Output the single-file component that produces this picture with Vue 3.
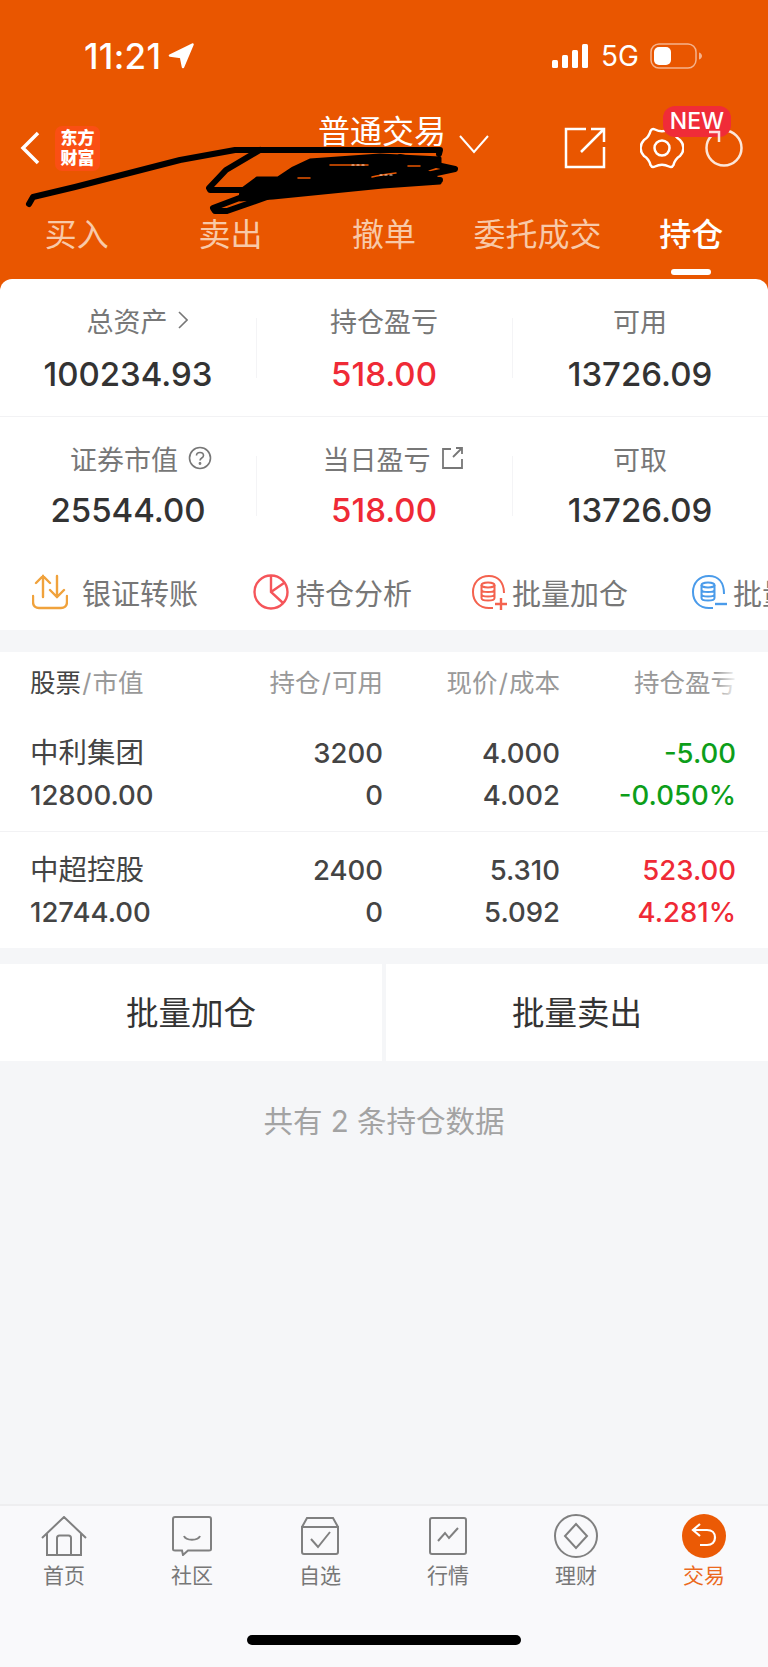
<template>
  <div class="page">
    <header class="head">
      <div class="status">
        <span class="time">11:21</span>
        <svg class="loc" width="26" height="26" viewBox="0 0 26 26"><path d="M24.500 1.500 2 12.500l11 1.500 2 10z" fill="#fff" stroke="#fff" stroke-width="2.500" stroke-linejoin="round"/></svg>
        <div class="status-right">
          <svg width="38" height="24" viewBox="0 0 38 24" fill="#fff">
            <rect x="0" y="16" width="6" height="8" rx="1.5"/>
            <rect x="10" y="11" width="6" height="13" rx="1.5"/>
            <rect x="20" y="6" width="6" height="18" rx="1.5"/>
            <rect x="30" y="0" width="6" height="24" rx="1.5"/>
          </svg>
          <span class="net">5G</span>
          <svg width="52" height="26" viewBox="0 0 52 26">
            <rect x="1" y="1" width="45" height="24" rx="8" fill="none" stroke="#fff" stroke-opacity=".55" stroke-width="1.5"/>
            <rect x="4" y="4" width="17" height="18" rx="5" fill="#fff"/>
            <path d="M49 9.5c2 .6 3 2 3 3.5s-1 2.900-3 3.500z" fill="#fff" fill-opacity=".55"/>
          </svg>
        </div>
      </div>

      <div class="nav">
        <svg class="back" width="20" height="34" viewBox="0 0 20 34"><path d="M18 2 3 17l15 15" fill="none" stroke="#fff" stroke-width="3.500"/></svg>
        <div class="logo">东方<br />财富</div>
        <div class="title">普通交易</div>
        <svg class="down" width="30" height="19" viewBox="0 0 30 19"><path d="m1 1 14 16L29 1" fill="none" stroke="#fff" stroke-width="2"/></svg>
        <svg class="share" width="42" height="42" viewBox="0 0 42 42" fill="none" stroke="#fff" stroke-width="2.500">
          <path d="M22 2H2v38h38V20M17 25 40 2M27 2h13v13"/>
        </svg>
        <svg class="gear" width="44" height="42" viewBox="0 0 44 42" fill="none" stroke="#fff" stroke-width="2.500" stroke-linejoin="round">
          <path d="M15 2.500Q22 6 29 2.500 32 1 33.500 4 35 10 40 13 47 21 40 29 35 32 33.500 38 32 41 29 39.500 22 36 15 39.500 12 41 10.500 38 9 32 4 29-3 21 4 13 9 10 10.500 4 12 1 15 2.500z"/>
          <circle cx="22" cy="21" r="7.500"/>
        </svg>
        <div class="refresh">
          <svg width="38" height="38" viewBox="0 0 38 38" fill="none" stroke="#fff" stroke-opacity=".85" stroke-width="2.500"><circle cx="19" cy="19" r="17.500"/></svg>
          <span class="badge">NEW</span>
          <svg class="refresh-arrow" width="38" height="38" viewBox="0 0 38 38" fill="none" stroke="#fff" stroke-opacity=".85" stroke-width="2.500"><path d="M4 3h10v10"/></svg>
        </div>
      </div>

      <nav class="tabs">
        <div v-for="t in tabs" :key="t" class="tab" :class="{ on: t === '持仓' }">{{ t }}</div>
      </nav>

      <!-- account number scribbled out in the screenshot -->
      <svg class="scribble" width="768" height="120" viewBox="0 100 768 120" fill="none" stroke="#000" stroke-width="6" stroke-linecap="round" stroke-linejoin="round">
        <path d="M29 204l4-7 42-10 105-27 55-10h205l-1 4"/>
        <path d="M260 150l-34 20-17 18 1 2 42 0"/>
        <path d="M250 194l-37 14 2 3 12 0 40-14"/>
        <path d="M400 157l55 12-42 9"/>
        <path d="M380 178l60 2"/>
        <path fill="#000" stroke-width="3" d="M241 190l16-12h21l15-10 17-8 70-5 60 3v7l-15 5 15 10v3l-57 4-50 5-60 6-33 2z"/>
        <path stroke="#e95600" stroke-width="1.500" d="M330 165h38M408 166h12M298 178h12M372 177c8-2 16-3 24-4"/>
        <path stroke="#f8dcc8" stroke-width="1.200" stroke-dasharray="2 3" d="M352 165h14M380 175h12"/>
      </svg>
    </header>

    <section class="card">
      <div v-for="(row, i) in stats" :key="i" class="stat-row" :class="'r' + i">
        <div v-for="s in row" :key="s.label" class="stat">
          <div class="stat-label" :class="s.icon">
            {{ s.label }}
            <svg v-if="s.icon === 'arrow'" width="10" height="20" viewBox="0 0 10 20"><path d="m1 2 8 8-8 8" fill="none" stroke="#777" stroke-width="1.600"/></svg>
            <svg v-if="s.icon === 'help'" width="24" height="24" viewBox="0 0 24 24" fill="none" stroke="#777" stroke-width="1.600">
              <circle cx="12" cy="12" r="10.500"/>
              <path d="M8.500 9.500C8.500 7.500 10 6.500 12 6.500s3.500 1.200 3.500 3c0 2.600-3.500 2.400-3.500 5"/>
              <circle cx="12" cy="17.500" r=".6"/>
            </svg>
            <svg v-if="s.icon === 'open'" width="23" height="24" viewBox="0 0 23 24" fill="none" stroke="#777" stroke-width="1.800">
              <path d="M10 3H2v19h19v-9M12 11l9-9M15 2h6v6"/>
            </svg>
          </div>
          <div class="stat-value" :class="{ red: s.red }">{{ s.value }}</div>
        </div>
      </div>

      <div class="actions">
        <div class="action a1">
          <svg width="36" height="36" viewBox="0 0 36 36" fill="none" stroke="#f0a23c" stroke-width="2.400" stroke-linecap="round">
            <path d="M11 23V2M4 9l7-7 7 7M25 2v21M18 16l7 7 7-7M1 22v6c0 4 3 6 6 6h22c3 0 6-2 6-6v-6"/>
          </svg>
          <span>银证转账</span>
        </div>
        <div class="action a2">
          <svg width="36" height="36" viewBox="0 0 36 36" fill="none" stroke="#f5555a" stroke-width="2.400">
            <circle cx="18" cy="18" r="16.500"/>
            <path d="M18 2v16l12 11M18 18 31 9"/>
          </svg>
          <span>持仓分析</span>
        </div>
        <div class="action a3">
          <svg width="36" height="36" viewBox="0 0 36 36" fill="none" stroke="#f4624e" stroke-width="2">
            <path d="M33 19C33 8 27 2 18 2 8 2 2 9 2 18s6 16 16 16h4"/>
            <ellipse cx="17" cy="11" rx="6.500" ry="2.500"/>
            <path d="M10.500 11v13c0 1.500 3 2.500 6.500 2.500s6.500-1 6.500-2.500V11M10.500 15.500c0 1.500 3 2.500 6.500 2.500s6.500-1 6.500-2.500M10.500 20c0 1.500 3 2.500 6.500 2.500s6.500-1 6.500-2.500"/>
            <path stroke-width="2.400" d="M24 30h12M30 24v12"/>
          </svg>
          <span>批量加仓</span>
        </div>
        <div class="action a4">
          <svg width="36" height="36" viewBox="0 0 36 36" fill="none" stroke="#4a9bea" stroke-width="2">
            <path d="M33 20C33 8 27 2 18 2 8 2 2 9 2 18s6 16 16 16h4"/>
            <ellipse cx="17" cy="11" rx="6.500" ry="2.500"/>
            <path d="M10.500 11v13c0 1.500 3 2.500 6.500 2.500s6.500-1 6.500-2.500V11M10.500 15.500c0 1.500 3 2.500 6.500 2.500s6.500-1 6.500-2.500M10.500 20c0 1.500 3 2.500 6.500 2.500s6.500-1 6.500-2.500"/>
            <path stroke-width="2.400" d="M24 30h12"/>
          </svg>
          <span>批量</span>
        </div>
      </div>
    </section>

    <section class="table">
      <div class="tr th">
        <div><b>股票</b> / 市值</div>
        <div>持仓 / 可用</div>
        <div>现价 / 成本</div>
        <div class="fade">持仓盈亏</div>
      </div>
      <div v-for="p in positions" :key="p.name" class="stock">
        <div class="tr">
          <div class="name">{{ p.name }}</div>
          <div>{{ p.qty }}</div>
          <div>{{ p.price }}</div>
          <div :class="p.dir">{{ p.pnl }}</div>
        </div>
        <div class="tr">
          <div>{{ p.value }}</div>
          <div>{{ p.avail }}</div>
          <div>{{ p.cost }}</div>
          <div :class="p.dir">{{ p.pct }}</div>
        </div>
      </div>
    </section>

    <div class="buttons">
      <div class="btn">批量加仓</div>
      <div class="btn">批量卖出</div>
    </div>

    <div class="note">共有 2 条持仓数据</div>

    <footer class="bar">
      <div class="items">
        <div v-for="item in bar" :key="item.label" class="item" :class="{ on: item.on }">
          <div class="ico">
            <svg v-if="item.label === '首页'" width="46" height="40" viewBox="0 0 46 40" fill="none" stroke="#808080" stroke-width="2">
              <path d="M1 22 23 1l22 21M6 18v21h34V18M16 39V22c0-1.500 1-2.500 2.500-2.500h9c1.500 0 2.500 1 2.500 2.500v17"/>
            </svg>
            <svg v-if="item.label === '社区'" width="40" height="40" viewBox="0 0 40 40" fill="none" stroke="#808080" stroke-width="2">
              <path d="M3 1h34c1 0 2 1 2 2v30c0 1-1 1.500-2 1.500H16l-5 4.500-1-4.500H3c-1 0-2-.5-2-1.500V3c0-1 1-2 2-2z"/>
              <path d="M12 20c2 5 14 5 16 0"/>
            </svg>
            <svg v-if="item.label === '自选'" width="40" height="38" viewBox="0 0 40 38" fill="none" stroke="#808080" stroke-width="2">
              <path d="M2 10 7 1h26l5 9M2 10h36v25c0 1-1 2-2 2H4c-1 0-2-1-2-2z"/>
              <path d="m11 22 7 8 12-15"/>
            </svg>
            <svg v-if="item.label === '行情'" width="38" height="38" viewBox="0 0 38 38" fill="none" stroke="#808080" stroke-width="2">
              <rect x="1" y="1" width="36" height="36" rx="2"/>
              <path d="m9 24 7-8 4 5 9-10"/>
            </svg>
            <svg v-if="item.label === '理财'" width="44" height="44" viewBox="0 0 44 44" fill="none" stroke="#808080" stroke-width="2">
              <circle cx="22" cy="22" r="21"/>
              <path d="M22 10 33 22 22 34 11 22z"/>
            </svg>
            <svg v-if="item.label === '交易'" width="44" height="44" viewBox="0 0 44 44" fill="none" stroke="#fff" stroke-width="2.200">
              <circle cx="22" cy="22" r="22" fill="#eb5a05" stroke="none"/>
              <path d="m18 10-7 6 7 6M11 16h14c5 0 8 3 8 7.500S30 31 25 31h-7"/>
            </svg>
          </div>
          <div class="label">{{ item.label }}</div>
        </div>
      </div>
      <div class="home"></div>
    </footer>
  </div>
</template>

<script setup>
const tabs = ['买入', '卖出', '撤单', '委托成交', '持仓']

const stats = [
  [
    { label: '总资产', value: '100234.93', icon: 'arrow' },
    { label: '持仓盈亏', value: '518.00', red: true },
    { label: '可用', value: '13726.09' }
  ],
  [
    { label: '证券市值', value: '25544.00', icon: 'help' },
    { label: '当日盈亏', value: '518.00', red: true, icon: 'open' },
    { label: '可取', value: '13726.09' }
  ]
]

const positions = [
  { name: '中利集团', value: '12800.00', qty: '3200', avail: '0', price: '4.000', cost: '4.002', pnl: '-5.00', pct: '-0.050%', dir: 'down-c' },
  { name: '中超控股', value: '12744.00', qty: '2400', avail: '0', price: '5.310', cost: '5.092', pnl: '523.00', pct: '4.281%', dir: 'up-c' }
]

const bar = [
  { label: '首页' },
  { label: '社区' },
  { label: '自选' },
  { label: '行情' },
  { label: '理财' },
  { label: '交易', on: true }
]
</script>

<style>
body {
  background: #f5f6f8;
}
</style>

<style scoped>
.page {
  display: flex;
  flex-direction: column;
  height: 1667px;
  overflow: hidden;
  background: #f5f6f8;
  color: #333;
  font-family: Inter, "Noto Sans CJK SC", sans-serif;
}

.head {
  position: relative;
  height: 290px;
  background: #e95600;
  color: #fff;
}

.status {
  display: flex;
  align-items: center;
  height: 112px;
  padding: 0 66px 0 84px;
}

.time {
  font-size: 35px;
  font-weight: 500;
  letter-spacing: 0.3px;
}

.loc {
  margin-left: 7px;
}

.status-right {
  display: flex;
  align-items: center;
  margin-left: auto;
}

.net {
  margin: 0 11px;
  font-size: 28px;
}

.nav {
  display: flex;
  align-items: center;
  height: 72px;
  padding-left: 20px;
}

.logo {
  width: 45px;
  height: 45px;
  margin-left: 15px;
  padding-top: 2px;
  box-sizing: border-box;
  border-radius: 7px;
  background: #fa4f14;
  font-size: 17px;
  font-weight: 900;
  line-height: 20px;
  text-align: center;
}

.title {
  width: 128px;
  margin-left: 218px;
  padding-bottom: 32px;
  font-size: 32px;
  line-height: 40px;
  white-space: nowrap;
}

.down {
  margin: -8px 0 0 13px;
}

.share {
  margin-left: 75px;
}

.gear {
  margin-left: 34px;
}

.refresh {
  position: relative;
  display: flex;
  margin-left: 21px;
}

.badge {
  position: absolute;
  top: -23px;
  left: -42px;
  width: 68px;
  height: 31px;
  border-radius: 12px;
  background: #f02c38;
  font-size: 23px;
  font-weight: 500;
  line-height: 31px;
  text-align: center;
}

.refresh-arrow {
  position: absolute;
  left: 0;
  top: 0;
}

.tabs {
  display: flex;
  margin-top: 21px;
}

.tab {
  position: relative;
  flex: 1;
  height: 60px;
  color: #f8c9a8;
  font-size: 32px;
  line-height: 60px;
  text-align: center;
}

.tab.on {
  color: #fff;
  font-weight: 500;
}

.tab.on::after {
  content: "";
  position: absolute;
  left: 57px;
  bottom: -10px;
  width: 40px;
  height: 6px;
  border-radius: 3px;
  background: #fff;
}

.scribble {
  position: absolute;
  left: 0;
  top: 100px;
}

.card {
  position: relative;
  margin-top: -11px;
  padding-bottom: 8px;
  border-radius: 12px 12px 0 0;
  background: #fff;
}

.stat-row {
  display: grid;
  grid-template-columns: repeat(3, 1fr);
  padding: 23px 0 20px;
  border-bottom: 1px solid #f2f2f4;
}

.stat-row.r1 {
  padding: 23px 0 1px;
  border-bottom: 0;
}

.stat {
  position: relative;
  text-align: center;
}

.stat + .stat::before {
  content: "";
  position: absolute;
  left: 0;
  top: 16px;
  height: 60px;
  width: 1px;
  background: #f4f4f6;
}

.stat-label {
  display: flex;
  align-items: center;
  justify-content: center;
  gap: 10px;
  height: 36px;
  color: #777;
  font-size: 27px;
}

.stat-label.arrow,
.stat-label.open {
  padding-left: 18px;
}

.stat-label.help {
  padding-left: 26px;
}

.stat-value {
  margin-top: 14px;
  font-size: 33px;
  font-weight: 500;
  line-height: 44px;
}

.r1 .stat-value {
  margin-top: 12px;
}

.red {
  color: #ef2a36;
}

.actions {
  display: flex;
  align-items: center;
  height: 60px;
  margin-top: 29px;
  padding-left: 32px;
  white-space: nowrap;
  overflow: hidden;
}

.action {
  display: flex;
  flex: none;
  align-items: center;
  gap: 7px;
  color: #777;
  font-size: 29px;
}

.a1 {
  gap: 14px;
}

.a2 {
  margin-left: 55px;
}

.a3 {
  gap: 5px;
  margin-left: 59px;
}

.a4 {
  gap: 6px;
  margin-left: 63px;
}

.table {
  margin-top: 22px;
  padding-bottom: 15px;
  background: #fff;
}

.tr {
  display: grid;
  grid-template-columns: 176px 177px 177px 176px;
  padding-left: 30px;
  font-size: 27.5px;
  font-weight: 500;
  line-height: 42px;
  text-align: right;
  color: #444;
}

.tr > div:first-child {
  text-align: left;
}

.name {
  font-size: 28.5px;
  font-weight: 400;
}

.th {
  height: 62px;
  color: #999;
  font-size: 25.5px;
  font-weight: 400;
  line-height: 62px;
  word-spacing: -6px;
  white-space: nowrap;
}

.th b {
  color: #444;
  font-weight: 400;
}

.fade {
  position: relative;
}

.fade::after {
  content: "";
  position: absolute;
  right: -2px;
  top: 0;
  bottom: 0;
  width: 22px;
  background: linear-gradient(90deg, rgba(255, 255, 255, 0), #fff);
}

.stock {
  padding: 18px 0 15px;
  border-bottom: 1px solid #f2f2f4;
}

.stock:last-child {
  padding: 17px 0 0;
  border-bottom: 0;
}

.down-c {
  color: #0d9e1a;
}

.up-c {
  color: #ef2a36;
}

.buttons {
  display: flex;
  gap: 4px;
  margin-top: 16px;
}

.btn {
  flex: 1;
  height: 97px;
  background: #fff;
  color: #333;
  font-size: 32.5px;
  line-height: 100px;
  text-align: center;
}

.note {
  margin-top: 40px;
  color: #a3a3a3;
  font-size: 29.5px;
  line-height: 40px;
  text-align: center;
}

.bar {
  margin-top: auto;
  height: 163px;
  box-sizing: border-box;
  border-top: 2px solid #eeeef0;
  background: #f9f9fb;
}

.items {
  display: flex;
  padding-top: 8px;
}

.item {
  flex: 1;
  color: #777;
  font-size: 21px;
  text-align: center;
}

.item.on {
  color: #eb6a1e;
}

.ico {
  display: flex;
  align-items: center;
  justify-content: center;
  height: 44px;
}

.label {
  margin-top: 2px;
  line-height: 32px;
}

.home {
  width: 274px;
  height: 10px;
  margin: 43px auto 0;
  border-radius: 5px;
  background: #000;
}
</style>
